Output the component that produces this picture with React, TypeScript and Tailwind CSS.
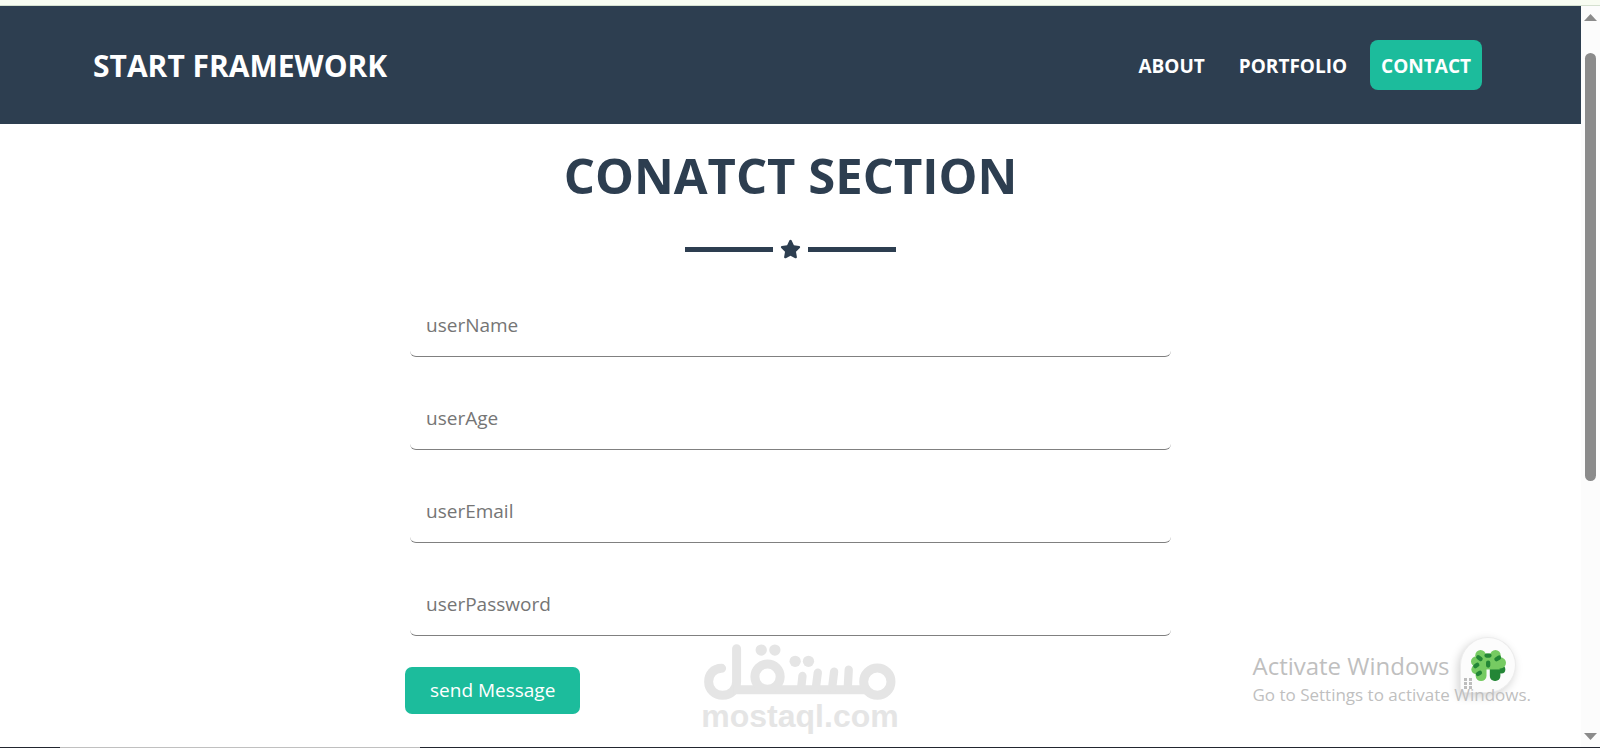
import { clsx } from 'clsx'

interface NavItem {
  label: string
  href: string
  active?: boolean
}

interface Field {
  name: string
  type: string
}

const navItems: NavItem[] = [
  { label: 'ABOUT', href: '#about' },
  { label: 'PORTFOLIO', href: '#portfolio' },
  { label: 'CONTACT', href: '#contact', active: true },
]

const fields: Field[] = [
  { name: 'userName', type: 'text' },
  { name: 'userAge', type: 'text' },
  { name: 'userEmail', type: 'email' },
  { name: 'userPassword', type: 'password' },
]

const Navbar = () => (
  <header className="bg-[#2d3e50] text-white">
    <nav className="flex h-[118px] items-center justify-between pr-[99px] pl-[93px]">
      <a href="#home" className="text-[30px] font-bold">
        START FRAMEWORK
      </a>
      <ul className="flex items-center gap-3">
        {navItems.map((item) => (
          <li key={item.label}>
            <a
              href={item.href}
              className={clsx(
                'flex h-[50px] items-center rounded-lg px-[11px] pt-0.5 text-[19px] font-bold',
                item.active && 'bg-[#1cbc9c]'
              )}
            >
              {item.label}
            </a>
          </li>
        ))}
      </ul>
    </nav>
  </header>
)

const StarDivider = () => (
  <div className="flex items-center justify-center gap-[7px]">
    <span className="h-[5px] w-[88px] bg-[#2d3e50]" />
    <svg viewBox="0 0 576 512" className="h-5 w-[21px] fill-[#2d3e50]" aria-hidden="true">
      <path d="M316.9 18C311.6 7 300.4 0 288.1 0s-23.4 7-28.8 18L195 150.3 51.4 171.5c-12 1.8-22 10.2-25.7 21.7s-.7 24.2 7.9 32.7L137.8 329 113.2 474.7c-2 12 3 24.2 12.9 31.3s23 8 33.8 2.3l128.3-68.5 128.3 68.5c10.8 5.7 23.9 4.9 33.8-2.3s14.9-19.3 12.9-31.3L438.5 329 542.7 225.9c8.6-8.5 11.7-21.2 7.9-32.7s-13.7-19.9-25.7-21.7L381.2 150.3 316.9 18z" />
    </svg>
    <span className="h-[5px] w-[88px] bg-[#2d3e50]" />
  </div>
)

const ContactForm = () => (
  <form className="mx-auto mt-[34px] w-full max-w-[771px]" onSubmit={(e) => e.preventDefault()}>
    <div className="flex flex-col gap-[29px] px-[5px]">
      {fields.map((field) => (
        <input
          key={field.name}
          type={field.type}
          name={field.name}
          aria-label={field.name}
          placeholder={field.name}
          className="h-16 w-full rounded-md border-b border-[#808080] px-4 text-[19px] outline-none placeholder:text-[#757575]"
        />
      ))}
    </div>
    <button
      type="submit"
      className="mt-[31px] h-[47px] rounded-[7px] bg-[#1cbc9c] px-[25px] text-[19px] text-white"
    >
      send Message
    </button>
  </form>
)

const MostaqlMark = () => (
  <div className="pointer-events-none absolute bottom-4 left-1/2 flex -translate-x-1/2 flex-col items-center text-[#e5e5e5]">
    <svg viewBox="40 42 580 174" className="h-[58px] w-[193px]" fill="none" stroke="currentColor" aria-hidden="true">
      <path
        d="M95 118C70 118 56 137 56 158C56 182 75 199 98 199C122 199 140 182 140 158V59"
        strokeWidth="27"
        strokeLinecap="round"
      />
      <path d="M130 182H563" strokeWidth="27" />
      <circle cx="233" cy="143" r="38" strokeWidth="27" />
      <circle cx="563" cy="158" r="41" strokeWidth="27" fill="white" />
      <path d="M334 178L338 141M378 178L384 131M427 178L433 128M474 178L477 122" strokeWidth="25" strokeLinecap="round" />
      <g fill="currentColor" stroke="none">
        <circle cx="214" cy="63" r="17" />
        <circle cx="255" cy="63" r="17" />
        <circle cx="316" cy="97" r="17" />
        <circle cx="356" cy="97" r="17" />
      </g>
    </svg>
    <span className="font-['Liberation_Sans',sans-serif] text-[32px] leading-[30px] font-bold">mostaql.com</span>
  </div>
)

const CloverBubble = () => (
  <button
    type="button"
    aria-label="Assistant"
    className="absolute right-[84px] bottom-[54px] flex size-14 items-center justify-center rounded-full rounded-bl-lg border border-[#ececec] bg-[#fcfcfc] shadow-[-2px_3px_10px_rgba(0,0,0,0.18)]"
  >
    <svg viewBox="88 60 112 100" className="h-[33px] w-[37px]" aria-hidden="true">
      <g fill="#238636">
        <rect x="148" y="105" width="32" height="52" rx="15" />
        <circle cx="183" cy="122" r="12" />
      </g>
      <g fill="#76cb62">
        <circle cx="120" cy="79" r="16" />
        <circle cx="165" cy="79" r="16" />
        <circle cx="106" cy="98" r="15" />
        <circle cx="106" cy="122" r="14" />
        <circle cx="180" cy="102" r="17" />
        <rect x="112" y="74" width="66" height="48" />
        <rect x="105" y="104" width="33" height="53" rx="16" />
      </g>
      <g stroke="#238636" strokeWidth="13" strokeLinecap="round">
        <path d="M113 85l7 5M104 112l6-4M112 136l6-4M143 101v9M168 91l8-5M138 80h9" />
      </g>
    </svg>
    <svg viewBox="0 0 8 12" className="absolute bottom-0.5 left-[3px] h-3 w-2 fill-[#bdbdbd]" aria-hidden="true">
      <path d="M0 0h3v3H0zM5 0h3v3H5zM0 4h3v3H0zM5 4h3v3H5zM0 8h3v3H0zM5 8h3v3H5z" />
    </svg>
  </button>
)

const ActivateNotice = () => (
  <div className="pointer-events-none absolute right-[69px] bottom-10 text-[#bfbfbf]">
    <p className="text-2xl leading-[34px]">Activate Windows</p>
    <p className="text-[17px] leading-6">Go to Settings to activate Windows.</p>
  </div>
)

const Scrollbar = () => (
  <div className="flex w-[19px] shrink-0 flex-col items-center bg-[#fcfcfc] pt-2 pb-[7px]" aria-hidden="true">
    <svg viewBox="0 0 13 7" className="h-[7px] w-[13px] fill-[#8b8b8b]">
      <path d="M6.5 0L13 7H0z" />
    </svg>
    <div className="flex w-[11px] flex-1 flex-col pt-8">
      <div className="h-[63%] rounded-full bg-[#8b8b8b]" />
    </div>
    <svg viewBox="0 0 13 7" className="h-[7px] w-[13px] fill-[#8b8b8b]">
      <path d="M0 0H13L6.5 7z" />
    </svg>
  </div>
)

export default function App() {
  return (
    <div className="flex min-h-screen flex-col bg-white font-['Open_Sans','Noto_Sans',sans-serif]">
      <div className="h-1.5 border-b border-[#d5e0d0] bg-[#f8fcf2]" />
      <div className="relative flex flex-1">
        <div className="flex-1">
          <Navbar />
          <main id="contact" className="pb-8">
            <h1 className="pt-[15px] pb-7 text-center text-[49px] leading-[72px] font-bold text-[#2d3e50]">
              CONATCT SECTION
            </h1>
            <StarDivider />
            <ContactForm />
          </main>
        </div>
        <Scrollbar />
        <MostaqlMark />
        <CloverBubble />
        <ActivateNotice />
      </div>
      <div className="flex h-px bg-[#22262f]">
        <div className="w-[60px]" />
        <div className="w-[360px] bg-[#c0c0c0]" />
      </div>
    </div>
  )
}
